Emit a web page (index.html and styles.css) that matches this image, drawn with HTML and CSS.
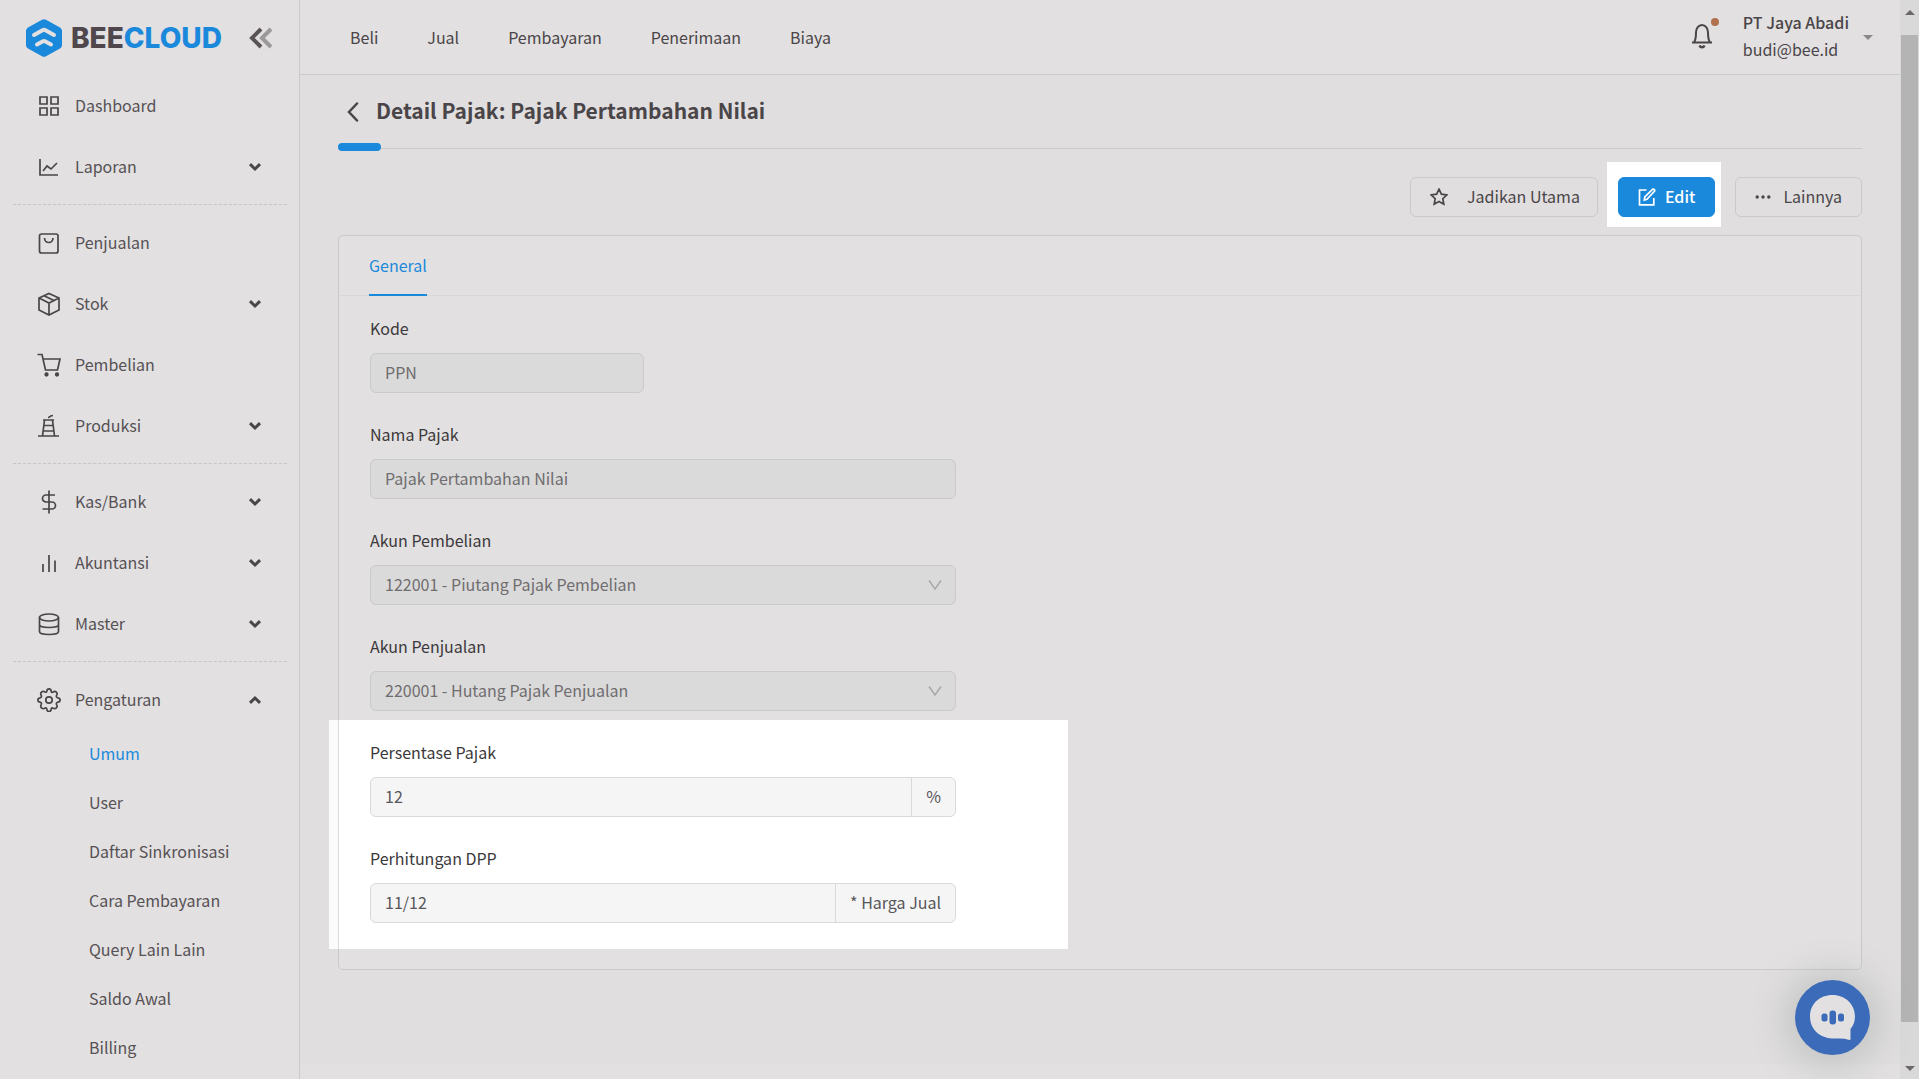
FILE: index.html
```html
<!DOCTYPE html>
<html lang="id">
<head>
<meta charset="utf-8">
<meta name="viewport" content="width=device-width, initial-scale=1">
<title>Detail Pajak - Beecloud</title>
<link rel="stylesheet" href="styles.css">
</head>
<body>
<svg class="defs" aria-hidden="true">
  <symbol id="chev" viewBox="0 0 14 10"><path d="M2 2.2l5 4.8 5-4.8" fill="none" stroke="currentColor" stroke-width="3"/></symbol>
</svg>
<div class="shell">
  <aside class="sidebar">
    <div class="brand">
      <a class="logo" href="#">
        <svg width="36" height="38" viewBox="0 0 36 38"><path d="M16 .8q2-1.1 4 0L34 8.400q2 1.100 2 3.400v14.400q0 2.300-2 3.400L20 37.300q-2 1.100-4 0L2 29.600q-2-1.100-2-3.400V11.800q0-2.300 2-3.400z" fill="#1b89db"/><path d="M8 16l8.500-4.800q1.500-.8 3 0L28 16M11 25.500l5.500-3q1.500-.8 3 0l5.500 3" fill="none" stroke="#e2e0e1" stroke-width="4" stroke-linecap="round"/></svg>
        <span class="wordmark">BEE<span class="wordmark-blue">CLOUD</span></span>
      </a>
      <button class="collapse" type="button" aria-label="Ciutkan menu">
        <svg width="24" height="22" viewBox="0 0 24 22" fill="none" stroke-width="4"><path d="M22 2l-9 9 9 9" stroke="#9b999a"/><path d="M12 2l-9 9 9 9" stroke="#5a5356"/></svg>
      </button>
    </div>
    <nav class="menu" aria-label="Menu utama">
      <a class="item" href="#"><svg class="ico" viewBox="0 0 24 24"><path d="M3 3h7v7H3zM14 3h7v7h-7zM3 14h7v7H3zM14 14h7v7h-7z"/></svg><span>Dashboard</span></a>
      <a class="item" href="#"><svg class="ico" viewBox="0 0 24 24"><path d="M3 4v16h18M6 16l4-5 4 3 6-6"/></svg><span>Laporan</span><svg class="chev"><use href="#chev"/></svg></a>
      <hr>
      <a class="item" href="#"><svg class="ico" viewBox="0 0 24 24"><rect x="2.500" y="3" width="18.500" height="19" rx="2"/><path d="M7.500 7c0 6 8.500 6 8.500 0"/></svg><span>Penjualan</span></a>
      <a class="item" href="#"><svg class="ico" viewBox="0 0 24 24"><path d="M12 1.500l10 4.500v12l-10 5-10-5V6zM2 6l10 5 10-5M12 11v12M7 3.800l10 4.800"/></svg><span>Stok</span><svg class="chev"><use href="#chev"/></svg></a>
      <a class="item" href="#"><svg class="ico" viewBox="0 0 24 24"><path d="M.5 1.500H5l3.500 15.500h12L23 6H6.200"/><circle cx="9.500" cy="21.500" r="1.300" fill="currentColor"/><circle cx="20" cy="21.500" r="1.300" fill="currentColor"/></svg><span>Pembelian</span></a>
      <a class="item" href="#"><svg class="ico" viewBox="0 0 24 24"><path d="M1 22h21M5.500 22L7.500 6h8l2 16M6 6h11M7 11.500h9M6.500 17h10"/><path d="M11 3.500c2 0 2-2 5-2"/></svg><span>Produksi</span><svg class="chev"><use href="#chev"/></svg></a>
      <hr>
      <a class="item" href="#"><svg class="ico" viewBox="0 0 24 24"><path d="M12 .5v23M18 5H9a3.500 3.500 0 0 0 0 7h6a3.500 3.500 0 0 1 0 7H5.500"/></svg><span>Kas/Bank</span><svg class="chev"><use href="#chev"/></svg></a>
      <a class="item" href="#"><svg class="ico" viewBox="0 0 24 24"><path d="M6 21v-8M12 21V4M18 21V9.500"/></svg><span>Akuntansi</span><svg class="chev"><use href="#chev"/></svg></a>
      <a class="item" href="#"><svg class="ico" viewBox="0 0 24 24"><ellipse cx="12" cy="5.500" rx="9.500" ry="3.500"/><path d="M2.500 5.500v14c0 4 19 4 19 0v-14M2.500 12.500c0 4 19 4 19 0"/></svg><span>Master</span><svg class="chev"><use href="#chev"/></svg></a>
      <hr>
      <a class="item" href="#" aria-expanded="true"><svg class="ico" viewBox="0 0 24 24"><circle cx="12" cy="12" r="3.200"/><path d="M9.800 3.300Q10 .9 12 .9t2.200 2.400q.2 1.400 1.600 1 2-1.700 3.500-.2t.2 3.500q-.6 1.600 1.200 2.200 2.400.2 2.400 2.200t-2.400 2.200q-1.800.6-1.200 2.200 1.300 2-.2 3.500t-3.500.2q-1.400-.6-1.600 1-.2 2.400-2.200 2.400t-2.200-2.400q-.4-1.600-1.800-1-2 1.300-3.500-.2t-.2-3.500q.6-1.600-1-2.200Q.9 14 .9 12t2.400-2.200q1.600-.6 1-2.200-1.300-2 .2-3.500t3.500-.2q1.400.8 1.800-.6z"/></svg><span>Pengaturan</span><svg class="chev chev-up"><use href="#chev"/></svg></a>
      <div class="submenu">
        <a class="current" href="#" aria-current="page">Umum</a>
        <a href="#">User</a>
        <a href="#">Daftar Sinkronisasi</a>
        <a href="#">Cara Pembayaran</a>
        <a href="#">Query Lain Lain</a>
        <a href="#">Saldo Awal</a>
        <a href="#">Billing</a>
      </div>
    </nav>
  </aside>

  <div class="content">
    <header class="topbar">
      <nav class="shortcuts" aria-label="Pintasan">
        <a href="#">Beli</a><a href="#">Jual</a><a href="#">Pembayaran</a><a href="#">Penerimaan</a><a href="#">Biaya</a>
      </nav>
      <div class="account">
        <button class="bell" type="button" aria-label="Notifikasi">
          <svg width="22" height="26" viewBox="0 0 22 26" fill="none" stroke="currentColor" stroke-width="2"><path d="M1 19.500h20M3 19.500c2-3 2-5 2-10a6 7.500 0 0 1 12 0c0 5 0 7 2 10"/><path d="M8.500 22.500c1 2.400 4 2.400 5 0" stroke-width="2.400"/></svg>
          <span class="dot"></span>
        </button>
        <button class="user" type="button">
          <span class="who"><strong>PT Jaya Abadi</strong><span>budi@bee.id</span></span>
          <span class="caret"></span>
        </button>
      </div>
    </header>

    <main class="page">
      <div class="title">
        <a class="back" href="#" aria-label="Kembali"><svg width="14" height="20" viewBox="0 0 14 20"><path d="M11 1.500L3 10l8 8.500" fill="none" stroke="currentColor" stroke-width="2.500" stroke-linecap="round"/></svg></a>
        <h1>Detail Pajak: Pajak Pertambahan Nilai</h1>
      </div>
      <div class="rule"><span></span></div>

      <div class="actions">
        <button class="btn btn-main" type="button"><svg width="18" height="18" viewBox="0 0 18 18"><path d="M9 1.200l2.400 5 5.400.7-4 3.800 1 5.500L9 13.500l-4.800 2.700 1-5.500-4-3.800 5.400-.7z"/></svg><span>Jadikan Utama</span></button>
        <span class="spot"><button class="btn btn-primary" type="button"><svg width="18" height="18" viewBox="0 0 18 18"><path d="M8.500 2H1.500v14.800h14.300V10M6.300 12l.5-3 7.700-7.700q.8-.6 1.700.2t.2 1.800L9 11.300z"/></svg><span>Edit</span></button></span>
        <button class="btn btn-more" type="button"><svg width="16" height="18" viewBox="0 0 16 18"><path d="M2.200 9h.01M8 9h.01M13.800 9h.01" stroke-width="3.400" stroke-linecap="round"/></svg><span>Lainnya</span></button>
      </div>

      <section class="card">
        <div class="tabs" role="tablist"><button class="tab" type="button" role="tab" aria-selected="true">General</button></div>
        <form class="form">
          <div class="field"><label for="kode">Kode</label><input id="kode" class="control short" type="text" value="PPN" disabled></div>
          <div class="field"><label for="nama">Nama Pajak</label><input id="nama" class="control" type="text" value="Pajak Pertambahan Nilai" disabled></div>
          <div class="field"><label for="beli">Akun Pembelian</label>
            <div class="select"><select id="beli" class="control" disabled><option>122001 - Piutang Pajak Pembelian</option></select><svg width="14" height="12" viewBox="0 0 14 12"><path d="M1 1.500l6 8.500 6-8.500"/></svg></div></div>
          <div class="field"><label for="jual">Akun Penjualan</label>
            <div class="select"><select id="jual" class="control" disabled><option>220001 - Hutang Pajak Penjualan</option></select><svg width="14" height="12" viewBox="0 0 14 12"><path d="M1 1.500l6 8.500 6-8.500"/></svg></div></div>
          <div class="highlight">
            <div class="field"><label for="persen">Persentase Pajak</label>
              <div class="group"><input id="persen" type="text" value="12" disabled><span>%</span></div></div>
            <div class="field"><label for="dpp">Perhitungan DPP</label>
              <div class="group"><input id="dpp" type="text" value="11/12" disabled><span>* Harga Jual</span></div></div>
          </div>
        </form>
      </section>
    </main>
    <footer class="foot"></footer>
  </div>

  <div class="scroll" aria-hidden="true"><span class="arrow-up"></span><span class="thumb"></span><span class="arrow-down"></span></div>
</div>

<button class="chat" type="button" aria-label="Chat bantuan">
  <svg width="47" height="47" viewBox="0 0 47 47"><path d="M23.500 1C36.500 1 46 10.500 46 22.500c0 5.500-2 9.500-4.500 12.500V45q0 1-1 .9-5-1.400-10-1.400h-7C10.500 44 1 35 1 22.500S10.500 1 23.500 1z" fill="#e2e0e1"/><rect x="12.500" y="19.500" width="6" height="8" rx="2.500" fill="#3b6bb9"/><rect x="20.500" y="16.500" width="6.500" height="14" rx="3" fill="#3b6bb9"/><rect x="29" y="19.500" width="6" height="8" rx="2.500" fill="#3b6bb9"/></svg>
</button>
</body>
</html>
```
FILE: styles.css
```css
:root {
  --surface: #e2e0e1;
  --ground: #e0dedf;
  --line: #cbcaca;
  --ink: #4a4548;
  --blue: #1b89db;
}
* { box-sizing: border-box; }
body {
  margin: 0;
  background: var(--ground);
  color: var(--ink);
  font: 400 16px/24px "Noto Sans CJK JP", "Noto Sans CJK SC", "Open Sans", sans-serif;
}
button, input, select { font: inherit; color: inherit; margin: 0; }
button { padding: 0; border: 0; background: none; cursor: pointer; }
a { color: inherit; text-decoration: none; }
.defs { display: none; }

.shell { display: flex; min-height: 100vh; }

/* Sidebar */
.sidebar {
  flex: 0 0 300px;
  background: var(--surface);
  border-right: 1px solid var(--line);
}
.brand {
  display: flex;
  align-items: center;
  justify-content: space-between;
  height: 75px;
  padding: 0 26px;
}
.logo { display: flex; align-items: center; gap: 9px; }
.wordmark { padding-top: 1px; font: 800 28px/38px Inter, sans-serif; color: #4f474b; }
.wordmark-blue { color: var(--blue); }
.collapse svg { display: block; }
.menu { display: flex; flex-direction: column; }
.menu hr {
  width: 274px;
  margin: 7px 0 7px 13px;
  border: 0;
  border-top: 1px dashed #c6c5c5;
}
.item {
  display: flex;
  align-items: center;
  gap: 14px;
  height: 61px;
  padding: 0 37px;
  color: #565154;
}
.item span { padding-bottom: 2px; }
.ico {
  width: 24px;
  height: 24px;
  fill: none;
  stroke: var(--ink);
  color: var(--ink);
  stroke-width: 1.7;
}
.chev { width: 14px; height: 10px; margin-left: auto; color: var(--ink); }
.chev-up { transform: rotate(180deg); }
.submenu { display: flex; flex-direction: column; padding-left: 89px; }
.submenu a { padding-bottom: 2px; line-height: 47px; color: #565154; }
.submenu .current { color: var(--blue); }

/* Top bar */
.content { flex: 1; min-width: 0; display: flex; flex-direction: column; }
.topbar {
  display: flex;
  align-items: center;
  justify-content: space-between;
  height: 75px;
  padding: 0 27px 0 50px;
  background: var(--surface);
  border-bottom: 1px solid var(--line);
}
.shortcuts { display: flex; gap: 49px; }
.account { display: flex; align-items: center; gap: 30px; }
.bell { position: relative; height: 26px; margin-bottom: 3px; }
.bell svg { display: block; }
.dot {
  position: absolute;
  top: -5px;
  right: -6px;
  width: 8px;
  height: 8px;
  border-radius: 50%;
  background: #b0714c;
}
.user { display: flex; align-items: center; gap: 14px; text-align: left; }
.who { display: flex; flex-direction: column; padding-bottom: 2px; line-height: 27px; }
.who strong { font-weight: 500; }
.caret { border: 5px solid transparent; border-top-color: #8a888a; border-bottom: 0; }

/* Page */
.page { flex: 1; padding: 0 38px 93px; }
.title { display: flex; align-items: center; gap: 16px; height: 73px; padding-left: 8px; }
.back svg { display: block; }
h1 { margin: 0; padding-bottom: 3px; font-size: 21px; line-height: 32px; font-weight: 700; }
.rule { border-bottom: 1px solid var(--line); }
.rule span {
  display: block;
  width: 43px;
  height: 8px;
  margin: -5px 0 -3px;
  border-radius: 4px;
  background: var(--blue);
}
.actions { display: flex; justify-content: flex-end; align-items: flex-start; padding: 13px 0 8px; }
.actions > .btn { margin-top: 15px; }
.btn {
  display: flex;
  align-items: center;
  height: 40px;
  padding: 0 19px;
  border: 1px solid var(--line);
  border-radius: 6px;
}
.btn svg { fill: none; stroke: currentColor; stroke-width: 1.7; }
.btn span { padding-bottom: 2px; }
.btn-main { gap: 19px; padding-right: 17px; }
.btn-primary { gap: 9px; border-color: var(--blue); background: var(--blue); color: #fff; font-weight: 500; }
.btn-more { gap: 12px; }
.spot { margin: 0 14px 0 9px; padding: 15px 6px 10px 11px; background: #fff; }

/* Card and form */
.card { background: var(--surface); border: 1px solid var(--line); border-radius: 5px; }
.tabs { display: flex; padding: 0 30px; border-bottom: 1px solid #d8d7d7; }
.tab {
  height: 60px;
  margin-bottom: -1px;
  border-bottom: 2px solid var(--blue);
  color: var(--blue);
}
.form { padding: 20px 31px; }
.field { margin-bottom: 29px; }
.field label { display: block; width: fit-content; margin-bottom: 13px; color: #3c393b; }
.control {
  display: block;
  width: 586px;
  max-width: 100%;
  height: 40px;
  padding: 0 14px 2px;
  border: 1px solid var(--line);
  border-radius: 6px;
  background: #dadada;
  color: #706d6f;
  opacity: 1;
  appearance: none;
}
.short { width: 274px; }
.select { position: relative; width: 586px; max-width: 100%; }
.select svg {
  position: absolute;
  top: 14px;
  right: 14px;
  fill: none;
  stroke: #a9a8a8;
  stroke-width: 1.5;
}
.highlight {
  width: 739px;
  margin: -20px 0 0 -41px;
  padding: 20px 112px 26px 41px;
  background: linear-gradient(to right, #fbfbfb 9px, #dcdcdc 9px 10px, #fff 10px);
}
.highlight .field:last-child { margin-bottom: 0; }
.group {
  display: flex;
  height: 40px;
  border: 1px solid #d9d9d9;
  border-radius: 6px;
  background: #f5f5f5;
  overflow: hidden;
}
.group input {
  flex: 1;
  min-width: 0;
  padding: 0 14px 2px;
  border: 0;
  background: none;
  color: #57565a;
}
.group span { padding: 0 14px 2px; border-left: 1px solid #d9d9d9; line-height: 36px; color: #57565a; }
.foot { height: 15px; background: var(--surface); }

/* Scroll track */
.scroll {
  flex: 0 0 19px;
  display: flex;
  flex-direction: column;
  align-items: center;
  padding: 10px 0 8px;
  background: #dad9d9;
}
.arrow-up { border: 5px solid transparent; border-top: 0; border-bottom-color: #6b676a; }
.arrow-down { border: 5px solid transparent; border-bottom: 0; border-top-color: #6b676a; }
.thumb { flex: 1; width: 17px; margin: 20px 0 44px; background: #b4b4b4; }

/* Chat launcher */
.chat {
  position: fixed;
  right: 49px;
  bottom: 24px;
  display: flex;
  align-items: center;
  justify-content: center;
  width: 75px;
  height: 75px;
  border-radius: 50%;
  background: #3b6bb9;
  box-shadow: 0 2px 34px 10px rgba(110, 125, 115, .25);
}
```
